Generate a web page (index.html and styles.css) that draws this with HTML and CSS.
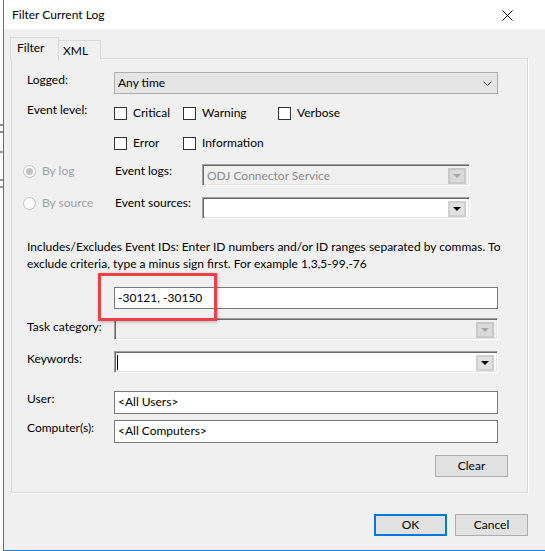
FILE: index.html
```html
<!DOCTYPE html>
<html>
<head>
<meta charset="utf-8">
<link rel="stylesheet" href="styles.css">
</head>
<body>
<div class="screen">
  <div class="bg-strip"></div>
  <div class="window">
    <div class="titlebar">
      <span class="title">Filter Current Log</span>
      <svg class="close" width="11" height="11" viewBox="0 0 11 11"><path d="M0.5 0.5 L10.5 10.5 M10.5 0.5 L0.5 10.5" stroke="#000" stroke-width="1"/></svg>
    </div>
    <div class="client">
      <div class="tabs">
        <div class="tab active">Filter</div>
        <div class="tab">XML</div>
      </div>
      <div class="panel">
        <div class="row row-logged">
          <span class="label">Logged:</span>
          <div class="select">
            <span class="select-text">Any time</span>
            <svg class="chev" width="9" height="5" viewBox="0 0 9 5"><path d="M0.5 0.5 L4.5 4.5 L8.5 0.5" fill="none" stroke="#444" stroke-width="1"/></svg>
          </div>
        </div>
        <div class="row row-level1">
          <span class="label label-up">Event level:</span>
          <div class="checks">
            <label class="check"><span class="box"></span>Critical</label>
            <label class="check"><span class="box"></span>Warning</label>
            <label class="check"><span class="box"></span>Verbose</label>
          </div>
        </div>
        <div class="row row-level2">
          <span class="label"></span>
          <div class="checks">
            <label class="check"><span class="box"></span>Error</label>
            <label class="check"><span class="box"></span>Information</label>
          </div>
        </div>
        <div class="row row-bylog">
          <label class="radio"><span class="circle checked"></span>By log</label>
          <span class="label sub">Event logs:</span>
          <div class="combo disabled narrow">
            <span class="combo-text">ODJ Connector Service</span>
            <span class="dd"><span class="arrow"></span></span>
          </div>
        </div>
        <div class="row row-bysource">
          <label class="radio"><span class="circle"></span>By source</label>
          <span class="label sub">Event sources:</span>
          <div class="combo narrow">
            <span class="combo-text"></span>
            <span class="dd"><span class="arrow"></span></span>
          </div>
        </div>
        <p class="hint">Includes/Excludes Event IDs: Enter ID numbers and/or ID ranges separated by commas. To<br>exclude criteria, type a minus sign first. For example 1,3,5-99,-76</p>
        <div class="row row-ids">
          <span class="label"></span>
          <div class="input">-30121, -30150</div>
        </div>
        <div class="row row-task">
          <span class="label label-task">Task category:</span>
          <div class="combo disabled wide">
            <span class="combo-text"></span>
            <span class="dd"><span class="arrow"></span></span>
          </div>
        </div>
        <div class="row row-keywords">
          <span class="label">Keywords:</span>
          <div class="combo wide">
            <span class="combo-text"><span class="caret"></span></span>
            <span class="dd"><span class="arrow"></span></span>
          </div>
        </div>
        <div class="row row-user">
          <span class="label">User:</span>
          <div class="input tall">&lt;All Users&gt;</div>
        </div>
        <div class="row row-computer">
          <span class="label">Computer(s):</span>
          <div class="input tall">&lt;All Computers&gt;</div>
        </div>
        <div class="row row-clear">
          <button class="btn clear">Clear</button>
        </div>
        <div class="highlight"></div>
      </div>
      <div class="buttons">
        <button class="btn ok">OK</button>
        <button class="btn">Cancel</button>
      </div>
    </div>
  </div>
</div>
</body>
</html>
```

FILE: styles.css
```css
* { box-sizing: border-box; }
html, body { margin: 0; padding: 0; }
body {
  width: 545px;
  height: 551px;
  overflow: hidden;
  font-family: Lato, "Noto Sans", sans-serif;
  font-size: 12px;
  line-height: 16px;
  color: #000;
  background: #fff;
}
.screen { display: flex; width: 545px; height: 551px; }
.bg-strip {
  width: 3px;
  flex: none;
  background:
    linear-gradient(#fff 0 124px, #8a8a8a 124px 126px, #fff 126px 131px, #8a8a8a 131px 133px, #fff 133px 151px, #9a9a9a 151px 153px, #fff 153px 179px, #9a9a9a 179px 181px, #fff 181px 186px, #9a9a9a 186px 188px, #fff 188px);
}
.window {
  flex: 1;
  display: flex;
  flex-direction: column;
  border-left: 1px solid #2b7bd3;
  border-bottom: 1px solid #2b7bd3;
}
.titlebar {
  height: 29px;
  flex: none;
  background: #fff;
  display: flex;
  align-items: center;
  justify-content: space-between;
  padding: 0 32px 0 8px;
}
.title { font-size: 12px; }
.close { display: block; margin-top: 1px; }
.client {
  flex: 1;
  background: #f0f0f0;
  display: flex;
  flex-direction: column;
}
.tabs {
  display: flex;
  align-items: flex-end;
  margin: 7px 0 0 6px;
  height: 23px;
  position: relative;
  z-index: 2;
}
.tab {
  height: 19px;
  border: 1px solid #d9d9d9;
  border-bottom: none;
  border-left: none;
  padding: 2px 0 0 4px;
  width: 42px;
  background: #f0f0f0;
}
.tab.active {
  height: 23px;
  width: 49px;
  border-left: 1px solid #d9d9d9;
  padding: 2px 0 0 6px;
  margin-bottom: -1px;
  background: #f0f0f0;
}
.panel {
  position: relative;
  margin: -1px 0 0 7px;
  width: 517px;
  border: 1px solid #d9d9d9;
  box-shadow: 1px 1px 0 #fff;
  padding: 0 28px 15px 15px;
  display: flex;
  flex-direction: column;
}
.row { display: flex; align-items: flex-start; }
.label { width: 87px; flex: none; }
.label-up { margin-top: -3px; }
.label-task { margin-top: 1px; }
.row-logged { margin-top: 13px; }
.select {
  width: 384px;
  height: 22px;
  background: #e5e5e5;
  border: 1px solid #adadad;
  display: flex;
  align-items: center;
  justify-content: space-between;
  padding: 0 5px 0 3px;
}
.chev { display: block; }
.row-level1 { margin-top: 11px; height: 16px; }
.row-level2 { margin-top: 14px; height: 16px; }
.checks { display: flex; }
.check { display: flex; align-items: flex-start; }
.check:nth-child(1) { width: 69px; }
.check:nth-child(2) { width: 95px; }
.box {
  width: 13px;
  height: 13px;
  border: 1px solid #333;
  background: #fff;
  margin: 2px 6px 0 0;
  flex: none;
}
.row-bylog { margin-top: 12px; }
.row-bysource { margin-top: 9px; }
.radio {
  display: flex;
  align-items: center;
  width: 92px;
  margin-left: -4px;
  color: #a0a0a0;
  height: 16px;
  flex: none;
}
.row-bylog .combo { margin-top: 1px; }
.row-bysource .combo { margin-top: 2px; }
.circle {
  width: 13px;
  height: 13px;
  border-radius: 50%;
  border: 1px solid #c2c2c2;
  background: #fbfbfb;
  margin-right: 6px;
  display: flex;
  align-items: center;
  justify-content: center;
  flex: none;
}
.circle.checked::after {
  content: "";
  width: 7px;
  height: 7px;
  border-radius: 50%;
  background: #c2c2c2;
}
.combo {
  height: 22px;
  border: 1px solid;
  border-color: #a0a0a0 #ffffff #ffffff #a0a0a0;
  box-shadow: inset 1px 1px 0 #696969, inset -1px -1px 0 #e3e3e3;
  background: #fff;
  display: flex;
  align-items: center;
  padding: 2px 3px 1px 3px;
}
.combo.narrow { width: 268px; }
.combo.wide { width: 384px; }
.combo.disabled { background: #f0f0f0; color: #8a8a8a; }
.combo-text { flex: 1; padding-left: 1px; display: flex; align-items: center; height: 16px; }
.caret { width: 1px; height: 15px; background: #000; margin-left: -2px; }
.dd {
  width: 18px;
  height: 16px;
  background: #e1e1e1;
  border: 2px solid #cfcfcf;
  display: flex;
  align-items: center;
  justify-content: center;
  flex: none;
}
.arrow {
  width: 0;
  height: 0;
  border-left: 4px solid transparent;
  border-right: 4px solid transparent;
  border-top: 4px solid #000;
  margin-top: 1px;
}
.disabled .arrow { border-top-color: #a6a6a6; }
.disabled .dd { background: #dadada; border-color: #c8c8c8; }
.hint {
  margin: 19px -20px 0 0;
  line-height: 17px;
  white-space: nowrap;
}
.row-ids { margin-top: 15px; }
.input {
  width: 384px;
  height: 22px;
  border: 1px solid #7a7a7a;
  background: #fff;
  padding: 2px 0 0 3px;
}
.input.tall { height: 23px; }
.row-task { margin-top: 9px; }
.row-keywords { margin-top: 11px; }
.row-user { margin-top: 18px; }
.row-computer { margin-top: 6px; }
.row-clear { margin-top: 12px; justify-content: flex-end; margin-right: -9px; }
.btn {
  font: inherit;
  width: 73px;
  height: 22px;
  background: #e1e1e1;
  border: 1px solid #adadad;
  padding: 0;
  color: #000;
}
.highlight {
  position: absolute;
  left: 86px;
  top: 214px;
  width: 119px;
  height: 48px;
  border: 3px solid #ec4046;
  box-shadow: 1px 1px 3px rgba(0,0,0,0.25);
}
.buttons {
  display: flex;
  justify-content: flex-end;
  gap: 8px;
  margin-top: 21px;
  padding-right: 17px;
}
.btn.ok { border: 2px solid #0078d7; }
```
